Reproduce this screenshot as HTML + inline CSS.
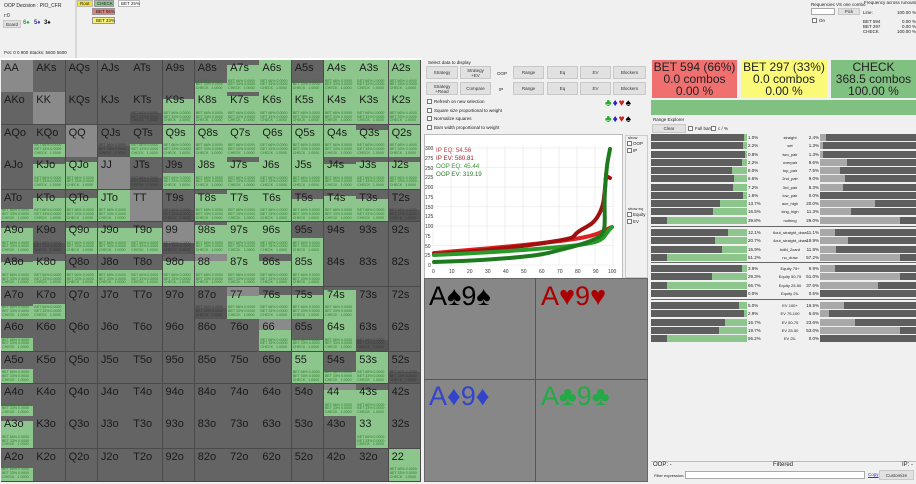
<!DOCTYPE html>
<html><head><meta charset="utf-8"><style>
*{box-sizing:border-box;margin:0;padding:0}
body{width:916px;height:484px;background:#f0f0f0;font-family:"Liberation Sans",sans-serif;position:relative;overflow:hidden;color:#222}
.a{position:absolute}
.s{font-size:5px;white-space:nowrap}
.btn{position:absolute;background:#e1e1e1;border:1px solid #c8c8c8;font-size:4.5px;text-align:center;display:flex;align-items:center;justify-content:center;color:#333;line-height:5px}
.cell{position:absolute;background:#646464;border-right:1px solid #4a4a4a;border-bottom:1px solid #4a4a4a;overflow:hidden}
.cell .l{position:absolute;left:3px;top:2px;font-size:11px;color:#1a1a1a;z-index:2}
.cell .g{position:absolute;left:0;right:0;bottom:0;background:#8cc68c}
.cell .t{position:absolute;left:1px;bottom:1px;font-size:3.6px;line-height:3.8px;color:#2e7d2e;z-index:1}
.cell .d{position:absolute;left:0;right:0;bottom:0;height:11px;background:#555;}
.cb{position:absolute;width:5px;height:5px;border:1px solid #777;background:#fff}
.row{position:absolute;height:7px}
.big{position:absolute;text-align:center;font-size:12px;line-height:12px;color:#222;white-space:nowrap;padding-top:1px}
</style></head><body>
<div class="a s" style="left:4px;top:3px">OOP Decision : PIO_CFR</div>
<div class="a s" style="left:4px;top:13px">r:0</div>
<div class="btn" style="left:3px;top:20px;width:18px;height:8px">Board</div>
<div class="a" style="left:23px;top:20px;font-size:6px;color:#3a3;font-weight:bold">6♠</div>
<div class="a" style="left:34px;top:20px;font-size:6px;color:#33a;font-weight:bold">5♦</div>
<div class="a" style="left:44px;top:20px;font-size:6px;color:#111;font-weight:bold">3♠</div>
<div class="a s" style="left:4px;top:50px;font-size:4.5px">Pot: 0 0 900 Stacks: 5600 5600</div>
<div class="a" style="left:75px;top:0;width:2px;height:58px;background:#d8d8d8"></div>
<div class="a s" style="left:77px;top:0;width:16px;height:7px;background:#f3e12a;border:1px solid #bba;font-size:4.5px;padding-left:2px">Root</div>
<div class="a s" style="left:94px;top:0;width:20px;height:7px;background:#8cc68c;border:1px solid #999;font-size:4.5px;padding-left:2px">CHECK</div>
<div class="a s" style="left:118px;top:0;width:22px;height:7px;background:#fff;border:1px solid #bbb;font-size:4.5px;padding-left:2px">BET 25%</div>
<div class="a s" style="left:92px;top:8px;width:23px;height:7px;background:#e87c7c;border:1px solid #999;font-size:4.5px;padding-left:3px">BET 66%</div>
<div class="a s" style="left:92px;top:17px;width:23px;height:7px;background:#f4f07a;border:1px solid #999;font-size:4.5px;padding-left:3px">BET 33%</div>
<div class="a" style="left:0;top:58px;width:422px;height:2px;background:#fff"></div>

<div id="grid"></div>

<div class="a s" style="left:428px;top:60px;font-size:4.5px">Select data to display</div>
<div class="btn" style="left:426px;top:66px;width:32px;height:13px">Strategy</div>
<div class="btn" style="left:460px;top:66px;width:31px;height:13px">Strategy<br>+EV</div>
<div class="a s" style="left:497px;top:71px;font-size:4.5px">OOP</div>
<div class="btn" style="left:513px;top:66px;width:31px;height:13px">Range</div>
<div class="btn" style="left:547px;top:66px;width:31px;height:13px">Eq</div>
<div class="btn" style="left:580px;top:66px;width:31px;height:13px">EV</div>
<div class="btn" style="left:613px;top:66px;width:33px;height:13px">Blockers</div>
<div class="btn" style="left:426px;top:82px;width:32px;height:13px">Strategy<br>+Read</div>
<div class="btn" style="left:460px;top:82px;width:31px;height:13px">Compare</div>
<div class="a s" style="left:499px;top:87px;font-size:4.5px">IP</div>
<div class="btn" style="left:513px;top:82px;width:31px;height:13px">Range</div>
<div class="btn" style="left:547px;top:82px;width:31px;height:13px">Eq</div>
<div class="btn" style="left:580px;top:82px;width:31px;height:13px">EV</div>
<div class="btn" style="left:613px;top:82px;width:33px;height:13px">Blockers</div>
<div class="cb" style="left:427px;top:99px"></div><div class="a s" style="left:434px;top:99px;font-size:4.5px">Refresh on new selection</div>
<div class="cb" style="left:427px;top:108px"></div><div class="a s" style="left:434px;top:108px;font-size:4.5px">Square size proportional to weight</div>
<div class="cb" style="left:427px;top:116px"></div><div class="a s" style="left:434px;top:116px;font-size:4.5px">Normalize squares</div>
<div class="cb" style="left:427px;top:125px"></div><div class="a s" style="left:434px;top:125px;font-size:4.5px">Bars width proportional to weight</div>
<div class="a" style="left:605px;top:98px;font-size:10px;letter-spacing:1px"><span style="color:#2a2">♣</span><span style="color:#22c">♦</span><span style="color:#c22">♥</span><span style="color:#000">♠</span></div>
<div class="a" style="left:605px;top:114px;font-size:10px;letter-spacing:1px"><span style="color:#2a2">♣</span><span style="color:#22c">♦</span><span style="color:#c22">♥</span><span style="color:#000">♠</span></div>
<div class="a" style="left:424px;top:134px;width:199px;height:145px;background:#fff;border:1px solid #bbb"></div>
<svg class="a" style="left:424px;top:134px" width="199" height="145" viewBox="424 134 199 145">
<g stroke="#e4e4e4" stroke-width="0.6">
<path d="M433 145V265M451 145V265M469 145V265M487 145V265M505 145V265M523 145V265M541 145V265M559 145V265M577 145V265M595 145V265M613 145V265"/>
<path d="M433 148H613M433 167.5H613M433 187H613M433 206.5H613M433 226H613M433 245.5H613M433 265H613"/>
</g>
<g font-family="Liberation Sans" font-size="5" fill="#333">
<text x="425" y="150">300</text><text x="425" y="160">275</text><text x="425" y="170">250</text><text x="425" y="179">225</text><text x="425" y="189">200</text><text x="425" y="199">175</text><text x="425" y="209">150</text><text x="425" y="218">125</text><text x="425" y="228">100</text><text x="425" y="238">75</text><text x="425" y="248">50</text><text x="425" y="257">25</text><text x="428" y="267">0</text>
<text x="432" y="273">0</text><text x="449" y="273">10</text><text x="467" y="273">20</text><text x="485" y="273">30</text><text x="503" y="273">40</text><text x="521" y="273">50</text><text x="539" y="273">60</text><text x="557" y="273">70</text><text x="575" y="273">80</text><text x="593" y="273">90</text><text x="608" y="273">100</text>
</g>
<g fill="none" stroke-width="4" stroke-linecap="round">
<path stroke="#e02020" d="M434 253C470 250 520 246 560 241S600 232 612 227"/>
<path stroke="#a01010" d="M434 254C480 251 520 247 550 242S570 238 578 232S592 226 598 216S604 200 606 176L610 178"/>
<path stroke="#2a9a2a" d="M434 255C480 253 530 250 570 246S600 238 612 227"/>
<path stroke="#1e7a1e" d="M434 262C470 261 500 259 520 257S545 254 560 250S585 244 597 238S603 220 605 190S608 160 610 149"/>
</g>
<g font-family="Liberation Sans" font-size="6.2">
<text x="436" y="152" fill="#c04040">IP EQ: 54.56</text>
<text x="436" y="160" fill="#a02020">IP EV: 580.81</text>
<text x="436" y="168" fill="#3a9a3a">OOP EQ: 45.44</text>
<text x="436" y="176" fill="#2a7a2a">OOP EV: 319.19</text>
</g>
</svg>
<div class="a" style="left:625px;top:135px;width:23px;height:143px;border:1px solid #ccc"></div>
<div class="a s" style="left:628px;top:135px;font-size:4px">show</div>
<div class="cb" style="left:627px;top:141px"></div><div class="a s" style="left:633px;top:141px;font-size:4.5px">OOP</div>
<div class="cb" style="left:627px;top:148px"></div><div class="a s" style="left:633px;top:148px;font-size:4.5px">IP</div>
<div class="a s" style="left:628px;top:206px;font-size:4px">show eq</div>
<div class="cb" style="left:627px;top:212px"></div><div class="a s" style="left:633px;top:212px;font-size:4.5px">Equity</div>
<div class="cb" style="left:627px;top:219px"></div><div class="a s" style="left:633px;top:219px;font-size:4.5px">EV</div>

<div class="a" style="left:424px;top:278px;width:224px;height:204px;background:#878787;border:1px solid #666"></div>
<div class="a" style="left:535px;top:278px;width:1px;height:204px;background:#555"></div>
<div class="a" style="left:424px;top:379px;width:224px;height:1px;background:#555"></div>
<div class="a" style="left:429px;top:281px;font-size:27px;color:#000">A♠9♠</div>
<div class="a" style="left:541px;top:281px;font-size:27px;color:#a00">A♥9♥</div>
<div class="a" style="left:429px;top:381px;font-size:27px;color:#3344cc">A♦9♦</div>
<div class="a" style="left:541px;top:381px;font-size:27px;color:#22aa44">A♣9♣</div>

<div class="a s" style="left:811px;top:2px;font-size:4.5px">Requencies VS one combo</div>
<div class="a s" style="left:864px;top:0px;font-size:4.5px">Frequency across runouts</div>
<div class="a" style="left:811px;top:8px;width:24px;height:7px;background:#fff;border:1px solid #aaa"></div>
<div class="btn" style="left:838px;top:8px;width:22px;height:7px">Pick</div>
<div class="cb" style="left:812px;top:18px"></div><div class="a s" style="left:819px;top:18px;font-size:4.5px">On</div>
<div class="a s" style="left:863px;top:10px;font-size:4.5px">Line:</div><div class="a s" style="left:897px;top:10px;font-size:4.5px">100.00 %</div>
<div class="a s" style="left:863px;top:19px;font-size:4.5px;line-height:5px">BET 594<br>BET 297<br>CHECK</div>
<div class="a s" style="left:897px;top:19px;font-size:4.5px;line-height:5px;text-align:right">0.00 %<br>0.00 %<br>100.00 %</div>
<div class="big" style="left:652px;top:60px;width:85px;height:38px;background:#f07070">BET 594 (66%)<br>0.0 combos<br>0.00 %</div>
<div class="big" style="left:741px;top:60px;width:86px;height:38px;background:#fafa78">BET 297 (33%)<br>0.0 combos<br>0.00 %</div>
<div class="big" style="left:831px;top:60px;width:85px;height:38px;background:#80c080">CHECK<br>368.5 combos<br>100.00 %</div>
<div class="a" style="left:651px;top:100px;width:265px;height:15px;background:#80c080"></div>
<div class="a s" style="left:653px;top:117px;font-size:4.5px">Range Explorer</div>
<div class="btn" style="left:652px;top:124px;width:34px;height:9px">Clear</div>
<div class="cb" style="left:688px;top:126px"></div><div class="a s" style="left:695px;top:126px;font-size:4.5px">Full bars</div>
<div class="cb" style="left:711px;top:126px"></div><div class="a s" style="left:718px;top:126px;font-size:4.5px">c / %</div>
<div id="re"></div>
<div class="a" style="left:651px;top:461px;width:265px;height:1px;background:#bbb"></div>
<div class="a" style="left:653px;top:462px;font-size:6px">OOP: -</div>
<div class="a" style="left:773px;top:462px;font-size:6px">Filtered</div>
<div class="a" style="left:902px;top:462px;font-size:6px">IP: -</div>
<div class="a s" style="left:654px;top:473px;font-size:4px">Filter expression:</div>
<div class="a" style="left:685px;top:471px;width:180px;height:8px;background:#fff;border:1px solid #aaa"></div>
<div class="a s" style="left:868px;top:472px;font-size:4.5px;color:#33c;text-decoration:underline">Copy</div>
<div class="btn" style="left:879px;top:470px;width:35px;height:10px">Customize</div>

<script>
var R="AKQJT98765432";
var F=[
[0,0,0,0,0,0,.28,.85,1,.28,1,1,1],
[0,0,0,0,-1,.8,1,.9,1,1,1,1,1],
[0,.4,0,-1,.4,1,1,1,1,1,1,.85,1],
[0,.8,.85,0,-1,.5,1,.85,1,1,.8,.85,.85],
[.4,.75,.75,1,0,-1,.85,1,1,.7,.8,.7,-1],
[.8,-1,.8,.8,.8,-1,.9,1,1,.5,0,0,0],
[.75,.8,.5,.5,.5,.8,.8,1,.8,1,0,0,0],
[.4,.45,0,0,0,0,-1,.7,.75,.75,.9,0,0],
[.4,0,0,0,0,0,0,0,.65,.35,1,-1,0],
[.45,0,0,0,0,0,0,0,0,1,.35,1,-1],
[.3,0,0,0,0,0,0,0,0,0,.8,.8,0],
[.85,0,0,0,0,0,0,0,0,0,0,1,0],
[.4,0,0,0,0,0,0,0,0,0,0,0,1]];
var h="",W=32.3,H=32.4;
var tt='BET 66% 0.0000<br>BET 33% 0.0000<br>CHECK&nbsp;&nbsp;&nbsp;1.0000';
for(var r=0;r<13;r++)for(var c=0;c<13;c++){
 var lab=r==c?R[r]+R[c]:(c>r?R[r]+R[c]+"s":R[c]+R[r]+"o");
 var x=1+c*W,y=60+r*H,f=F[r][c];
 var bg=r==c?"#8a8a8a":"#646464";
 var inner='<div class="l">'+lab+'</div>';
 if(f>0){inner+='<div class="g" style="height:'+(f*100)+'%"></div><div class="t">'+tt+'</div>';}
 else if(f<0){inner+='<div class="d"></div><div class="t" style="color:#3a3a3a">'+tt+'</div>';}
 h+='<div class="cell" style="left:'+x+'px;top:'+y+'px;width:'+(W+.5)+'px;height:'+(H+.5)+'px;background:'+bg+'">'+inner+'</div>';
}
document.getElementById("grid").innerHTML=h;
var G=[
[["straight","1.0%","2.4%",3,6],["set","2.2%","1.3%",4,3],["two_pair","0.8%","1.3%",2,3],["overpair","2.2%","9.6%",5,27],["top_pair","8.0%","7.5%",15,20],["2nd_pair","6.6%","9.0%",13,25],["3rd_pair","7.2%","8.3%",14,23],["low_pair","1.6%","0.0%",4,0],["ace_high","13.7%","20.0%",27,55],["king_high","16.5%","11.3%",34,31],["nothing","39.8%","29.0%",80,80]],
[["6out_straight_draw","12.1%","11.1%",19,15],["4out_straight_draw","20.7%","19.9%",32,28],["bdfd_2card","15.9%","11.8%",25,16],["no_draw","51.2%","57.2%",80,80]],
[["Equity 75+","3.9%","9.9%",5,15],["Equity 50-75","29.3%","51.0%",35,80],["Equity 25-50","66.7%","37.6%",80,58],["Equity 25-","0.0%","0.5%",0,0]],
[["EV 100+","5.0%","16.5%",8,24],["EV 75-100","2.9%","6.6%",3,9],["EV 50-75","16.7%","23.6%",22,35],["EV 25-50","19.7%","53.0%",28,80],["EV 25-","56.2%","0.0%",80,0]]];
var starts=[134,229,265,302],o="";
G.forEach(function(g,i){
 var y0=starts[i];
 if(i>0)o+='<div class="a" style="left:651px;top:'+(y0-3)+'px;width:265px;height:1px;background:#666"></div>';
 g.forEach(function(e,j){
  var y=y0+j*8.25;
  o+='<div class="row" style="left:651px;top:'+y+'px;width:96px;background:#5e5e5e"><div class="a" style="right:0;top:0;height:7px;width:'+e[3]+'px;background:#8cc68c"></div></div>';
  o+='<div class="a s" style="left:748px;top:'+(y+1)+'px;font-size:4.5px">'+e[1]+'</div>';
  o+='<div class="a s" style="left:768px;top:'+(y+1)+'px;width:44px;text-align:center;font-size:4px">'+e[0]+'</div>';
  o+='<div class="a s" style="left:806px;top:'+(y+1)+'px;width:13px;text-align:right;font-size:4.5px">'+e[2]+'</div>';
  o+='<div class="row" style="left:820px;top:'+y+'px;width:96px;background:#5e5e5e"><div class="a" style="left:0;top:0;height:7px;width:'+e[4]+'px;background:#a8a8a8"></div></div>';
 });
});
document.getElementById("re").innerHTML=o;
</script>
</body></html>
